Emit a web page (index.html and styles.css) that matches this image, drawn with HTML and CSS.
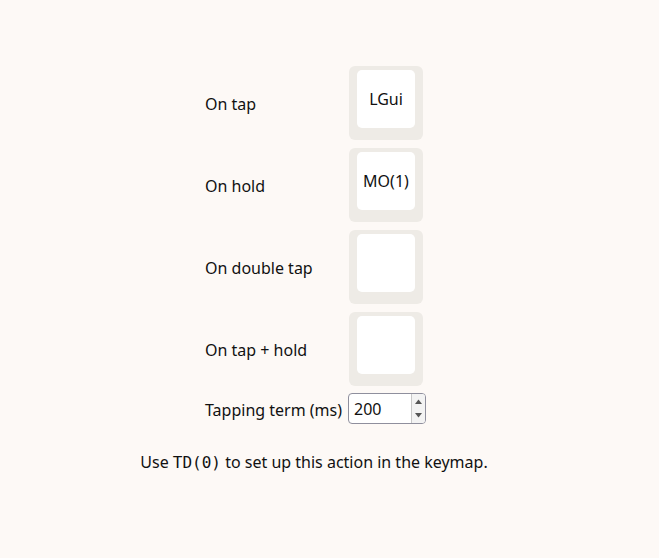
FILE: index.html
```html
<!DOCTYPE html>
<html>
<head>
<meta charset="utf-8">
<link rel="stylesheet" href="styles.css">
</head>
<body>
<main class="page">
  <div class="grid">
    <div class="label">On tap</div>
    <div class="key"><div class="cap">LGui</div></div>
    <div class="label">On hold</div>
    <div class="key"><div class="cap">MO(1)</div></div>
    <div class="label">On double tap</div>
    <div class="key"><div class="cap"></div></div>
    <div class="label">On tap + hold</div>
    <div class="key"><div class="cap"></div></div>
    <div class="label term">Tapping term (ms)</div>
    <div class="num">
      <span class="num-val">200</span>
      <span class="spin">
        <span class="arr"><svg width="7" height="5" viewBox="0 0 7 5"><path d="M0 5 L3.5 0.5 L7 5 Z" fill="#555"/></svg></span>
        <span class="arr"><svg width="7" height="5" viewBox="0 0 7 5"><path d="M0 0 L3.5 4.5 L7 0 Z" fill="#555"/></svg></span>
      </span>
    </div>
  </div>
  <p class="hint">Use <code>TD(0)</code> to set up this action in the keymap.</p>
</main>
</body>
</html>
```
FILE: styles.css
```css
html, body {
  margin: 0;
  padding: 0;
  background: #fdf9f6;
}
body {
  font-family: "Noto Sans", "Open Sans", sans-serif;
  font-size: 16px;
  color: #111;
}
.page {
  width: 628px;
  padding-top: 66px;
  display: flex;
  flex-direction: column;
  align-items: center;
}
.grid {
  display: grid;
  grid-template-columns: 144px 74px;
  row-gap: 8px;
  align-items: center;
}
.label {
  line-height: 20px;
  padding-top: 2px;
}
.key {
  width: 74px;
  height: 74px;
  box-sizing: border-box;
  background: #eeebe6;
  border-radius: 6px;
  padding: 4px 8px 12px 8px;
}
.cap {
  width: 58px;
  height: 58px;
  background: #fff;
  border-radius: 5px;
  display: flex;
  align-items: center;
  justify-content: center;
}
.term {
  margin-top: -1px;
}
.num {
  margin-left: -1px;
  width: 78px;
  height: 31px;
  box-sizing: border-box;
  border: 1px solid #8f8f9d;
  border-radius: 4px;
  background: #fff;
  display: flex;
  align-items: stretch;
  margin-top: -1px;
  overflow: hidden;
}
.num-val {
  flex: 1;
  padding-left: 5px;
  display: flex;
  align-items: center;
}
.spin {
  display: flex;
  flex-direction: column;
  width: 13px;
  border-left: 1px solid #c8c8c8;
  background: #f3f3f3;
}
.arr {
  flex: 1;
  display: flex;
  align-items: center;
  justify-content: center;
}
.hint {
  margin: 27px 0 0 0;
  line-height: 22px;
}
code {
  font-family: "DejaVu Sans Mono", monospace;
  font-size: 16px;
}
```
